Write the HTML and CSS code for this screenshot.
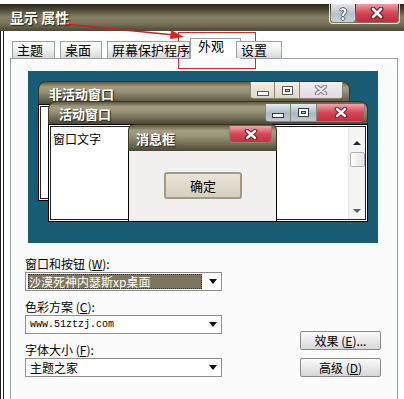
FILE: index.html
```html
<!DOCTYPE html>
<html lang="zh-CN">
  <head>
    <meta charset="UTF-8" />
    <title>显示 属性</title>
    <link rel="stylesheet" href="styles.css">
  </head>
  <body>
    <div class="titlebar">
      <span class="title-text">显示 属性</span>
      <div class="caption-btns">
        <span class="cap-btn help">?</span>
        <span class="cap-btn close">
          <svg width="14" height="12" viewBox="0 0 14 12">
            <path d="M3 2 L11 10 M11 2 L3 10" stroke="#6a1a20" stroke-width="5" stroke-linecap="round" />
            <path d="M3 2 L11 10 M11 2 L3 10" stroke="#fff" stroke-width="2.6" stroke-linecap="round" />
          </svg>
        </span>
      </div>
    </div>

    <div class="frame">
      <div class="tabs">
        <span class="tab" style="width: 43px">主题</span>
        <span class="tab" style="width: 42px">桌面</span>
        <span class="tab" style="width: 83px">屏幕保护程序</span>
        <span class="tab selected">外观</span>
        <span class="tab" style="width: 46px">设置</span>
      </div>

      <div class="panel">
        <div class="preview">
          <!-- inactive window -->
          <div class="win inactive">
            <div class="win-title">
              <span>非活动窗口</span>
              <div class="win-btns">
                <span class="wb min"><i></i></span>
                <span class="wb max"><i></i></span>
                <span class="wb cls">
                  <svg width="14" height="10" viewBox="0 0 14 10">
                    <path d="M3 1.5 L11 8.5 M11 1.5 L3 8.5" stroke="#8c8494" stroke-width="4.4" stroke-linecap="round" />
                    <path d="M3 1.5 L11 8.5 M11 1.5 L3 8.5" stroke="#f2ecf2" stroke-width="2.2" stroke-linecap="round" />
                  </svg>
                </span>
              </div>
            </div>
            <div class="win-body"></div>
          </div>

          <!-- active window -->
          <div class="win active">
            <div class="win-title">
              <span>活动窗口</span>
              <div class="win-btns">
                <span class="wb min"><i></i></span>
                <span class="wb max"><i></i></span>
                <span class="wb cls">
                  <svg width="14" height="11" viewBox="0 0 14 11">
                    <path d="M3 2 L11 9 M11 2 L3 9" stroke="#7a2028" stroke-width="4.6" stroke-linecap="round" />
                    <path d="M3 2 L11 9 M11 2 L3 9" stroke="#fff" stroke-width="2.4" stroke-linecap="round" />
                  </svg>
                </span>
              </div>
            </div>
            <div class="win-body">
              <span class="win-text">窗口文字</span>
              <div class="scrollbar">
                <span class="arrow up"></span>
                <span class="thumb"></span>
                <span class="arrow down"></span>
              </div>
            </div>
          </div>

          <!-- message box -->
          <div class="win msgbox">
            <div class="win-title">
              <span>消息框</span>
              <span class="wb cls">
                <svg width="14" height="11" viewBox="0 0 14 11">
                  <path d="M3 2 L11 9 M11 2 L3 9" stroke="#7a2028" stroke-width="4.6" stroke-linecap="round" />
                  <path d="M3 2 L11 9 M11 2 L3 9" stroke="#fff" stroke-width="2.4" stroke-linecap="round" />
                </svg>
              </span>
            </div>
            <div class="msg-body">
              <span class="ok-btn">确定</span>
            </div>
          </div>
        </div>

        <div class="options">
          <div class="fields">
            <label>窗口和按钮 (<u>W</u>):</label>
            <div class="select">
              <span class="value highlight">沙漠死神内瑟斯xp桌面</span>
              <span class="caret"></span>
            </div>
            <label>色彩方案 (<u>C</u>):</label>
            <div class="select">
              <span class="value mono">www.51ztzj.com</span>
              <span class="caret"></span>
            </div>
            <label>字体大小 (<u>F</u>):</label>
            <div class="select">
              <span class="value">主题之家</span>
              <span class="caret"></span>
            </div>
          </div>
          <div class="side-btns">
            <span class="btn">效果 (<u>E</u>)...</span>
            <span class="btn">高级 (<u>D</u>)</span>
          </div>
        </div>
      </div>
    </div>

    <svg class="markup" width="404" height="399" viewBox="0 0 404 399">
      <rect x="178.5" y="32.5" width="77" height="36" fill="none" stroke="#d42a2a" stroke-width="1" />
      <path d="M65 24 L174 35" stroke="#c82020" stroke-width="1.5" fill="none" />
      <path d="M184 37 L171 30 L170 39 Z" fill="#e02020" />
    </svg>
  </body>
</html>
```

FILE: styles.css
```css
* {
  margin: 0;
  padding: 0;
  box-sizing: border-box;
}

body {
  width: 404px;
  height: 399px;
  overflow: hidden;
  position: relative;
  background: #fff;
  font-family: "Noto Sans CJK SC", sans-serif;
  font-size: 12px;
  color: #000;
}

.titlebar {
  margin-top: 4px;
  height: 27px;
  display: flex;
  align-items: flex-start;
  background: linear-gradient(#2a2519 0%, #4e4a36 22%, #858064 48%, #7a755b 70%, #4d4833 100%);
}

.title-text {
  flex: 1;
  padding: 5px 0 0 10px;
  color: #fff;
  font-weight: bold;
  font-size: 14px;
  line-height: 17px;
  text-shadow: 1px 1px 1px #1e1a10;
}

.caption-btns {
  display: flex;
  gap: 1px;
  margin-right: 4px;
  padding: 0 1px 1px;
  border: 1px solid #e8e6dc;
  border-top: none;
  border-radius: 0 0 4px 4px;
}

.cap-btn {
  height: 18px;
  display: flex;
  align-items: center;
  justify-content: center;
  border-radius: 0 0 3px 3px;
}

.cap-btn.help {
  width: 24px;
  background: linear-gradient(#e2e8ec, #b4c2cc 55%, #c6d2da);
  color: #fff;
  font-weight: bold;
  font-size: 15px;
  text-shadow: -1px 0 #4a5a66, 1px 0 #4a5a66, 0 -1px #4a5a66, 0 1px #4a5a66;
}

.cap-btn.close {
  width: 42px;
  background: linear-gradient(#f0a0a8, #d44656 50%, #c02a3c);
}

.frame {
  height: 368px;
  border-left: 4px double #222;
  padding: 6px 6px 0 6px;
}

.tabs {
  height: 21px;
  display: flex;
  align-items: flex-end;
  padding-left: 2px;
  position: relative;
  z-index: 1;
}

.tab {
  height: 17px;
  margin-right: 5px;
  padding: 0 0 0 4px;
  border: 1px solid #9aa2a6;
  border-bottom: none;
  background: linear-gradient(#ffffff, #f0f0ee 50%, #d8d8d6);
  font-size: 13px;
  line-height: 16px;
  white-space: nowrap;
}

.tab.selected {
  width: 51px;
  height: 21px;
  margin: 0 0 -1px -5px;
  padding-left: 7px;
  background: #fff;
  line-height: 14px;
}

.tab.selected + .tab {
  margin-left: -5px;
}

.panel {
  height: 342px;
  border: 1px solid #9aa2a6;
  border-bottom: none;
  background: #fbfbfb;
  padding: 12px 0 0 14px;
}

.preview {
  position: relative;
  width: 350px;
  height: 172px;
  margin-left: 3px;
  background: #195c76;
}

.win {
  position: absolute;
  display: flex;
  flex-direction: column;
}

.win-title {
  height: 23px;
  flex: none;
  display: flex;
  align-items: flex-start;
  padding-left: 10px;
  border-radius: 8px 8px 0 0;
  border: 1px solid #3a3624;
  border-bottom: none;
  background: linear-gradient(#5c573f 0%, #a39e80 22%, #9a957a 40%, #76715a 70%, #4c4733 100%);
  color: #fff;
  font-weight: bold;
  font-size: 13px;
  line-height: 16px;
  text-shadow: 1px 1px 1px #28241a;
}

.win-title > span:first-child {
  flex: 1;
  padding-top: 4px;
}

.win-btns {
  display: flex;
  margin-right: 6px;
  border-radius: 0 0 5px 5px;
  overflow: hidden;
}

.wb {
  height: 17px;
  display: flex;
  align-items: center;
  justify-content: center;
  border: 1px solid #8a8670;
  border-top: none;
}

.wb + .wb {
  border-left: none;
}

.wb.min,
.wb.max {
  width: 25px;
}

.wb.cls {
  width: 43px;
}

.wb.min i {
  width: 12px;
  height: 5px;
  margin-top: 6px;
  border: 1px solid #3a3a3a;
  background: #fff;
}

.wb.max i {
  width: 11px;
  height: 9px;
  border: 1px solid #3a3a3a;
  box-shadow: inset 0 0 0 2px #fff, inset 0 0 0 3px #3a3a3a;
}

.inactive {
  left: 10px;
  top: 10px;
  width: 312px;
  height: 120px;
}

.inactive .wb.min,
.inactive .wb.max {
  background: linear-gradient(#f0eee8, #dcd8ca);
}

.inactive .wb.cls {
  background: linear-gradient(#f4eef4, #e2d6e2);
}

.inactive .wb i {
  border-color: #5a5a52;
}

.win-body {
  flex: 1;
  background: #fff;
  border: 1px solid #000;
  box-shadow: inset 0 0 0 1px #fff, inset 0 0 0 2px #222;
}

.active {
  left: 20px;
  top: 30px;
  width: 320px;
  height: 121px;
}

.active .wb {
  height: 18px;
  margin-top: 2px;
}

.active .win-btns {
  margin-top: 0;
  margin-right: 2px;
}

.active .wb.min,
.active .wb.max {
  width: 26px;
  background: linear-gradient(#e4ecf2, #a8bac8 55%, #bccad6);
}

.active .wb.cls {
  width: 48px;
  background: linear-gradient(#f2a4ac, #d44858 50%, #c2303e);
}

.active .win-body {
  display: flex;
  padding: 2px 0 2px 4px;
}

.win-text {
  flex: 1;
  font-size: 12px;
  line-height: 16px;
  padding-top: 4px;
}

.scrollbar {
  width: 17px;
  margin-right: 2px;
  display: flex;
  flex-direction: column;
  align-items: center;
  background: #f4f4f2;
  border-left: 1px solid #e6e6e6;
}

.arrow {
  width: 0;
  height: 0;
  border-left: 4px solid transparent;
  border-right: 4px solid transparent;
}

.arrow.up {
  margin-top: 14px;
  border-bottom: 4px solid #1c2a34;
}

.arrow.down {
  margin-top: auto;
  margin-bottom: 6px;
  border-top: 4px solid #50606c;
}

.thumb {
  width: 15px;
  height: 15px;
  margin-top: 7px;
  border: 1px solid #b0b4b8;
  border-radius: 2px;
  background: linear-gradient(90deg, #fdfdfd, #e4e4e4);
}

.msgbox {
  left: 100px;
  top: 53px;
  width: 149px;
  height: 98px;
}

.msgbox .win-title {
  height: 27px;
  padding-left: 7px;
  border-radius: 6px 6px 0 0;
}

.msgbox .win-title > span:first-child {
  padding-top: 6px;
}

.msgbox .wb.cls {
  margin: 1px 4px 0 0;
  border-radius: 0 0 4px 4px;
  background: linear-gradient(#f2a4ac, #d44858 50%, #c2303e);
}

.msg-body {
  flex: 1;
  background: #f1f0ee;
  border: 1px solid #000;
  border-top: none;
  padding: 21px 0 0 35px;
}

.ok-btn {
  width: 78px;
  height: 27px;
  display: flex;
  align-items: center;
  justify-content: center;
  border: 2px solid #a29b84;
  border-radius: 3px;
  background: linear-gradient(#e8e4d8, #d6d0bf);
  font-size: 13px;
}

.options {
  display: flex;
}

.fields {
  width: 197px;
  display: flex;
  flex-direction: column;
}

label {
  margin-top: 9px;
  height: 14px;
  line-height: 14px;
  font-size: 12px;
}

label:first-child {
  margin-top: 14px;
}

label u,
.btn u {
  text-decoration: underline;
}

.select {
  height: 19px;
  margin-top: 1px;
  display: flex;
  align-items: center;
  padding: 0 4px 0 2px;
  border: 1px solid #8e8e8e;
  background: #fff;
}

.value {
  flex: 1;
  padding-left: 2px;
  font-size: 12px;
  line-height: 15px;
}

.value.highlight {
  flex: none;
  width: 174px;
  padding-left: 1px;
  background: #7d755c;
  color: #fff;
  outline: 1px dotted #333;
  outline-offset: -1px;
}

.value.mono {
  font-family: "Liberation Mono", monospace;
  font-size: 10px;
}

.caret {
  width: 0;
  height: 0;
  margin-left: auto;
  border-left: 4px solid transparent;
  border-right: 4px solid transparent;
  border-top: 5px solid #111;
}

.side-btns {
  margin: 0 0 0 78px;
  align-self: flex-end;
  display: flex;
  flex-direction: column;
  gap: 8px;
}

.btn {
  width: 81px;
  height: 19px;
  display: flex;
  align-items: center;
  justify-content: center;
  border: 1px solid #8a8a8a;
  border-radius: 2px;
  background: linear-gradient(#fafafa, #e6e6e6 60%, #d6d6d6);
  font-size: 12px;
}

.markup {
  position: absolute;
  left: 0;
  top: 0;
  pointer-events: none;
}
```
